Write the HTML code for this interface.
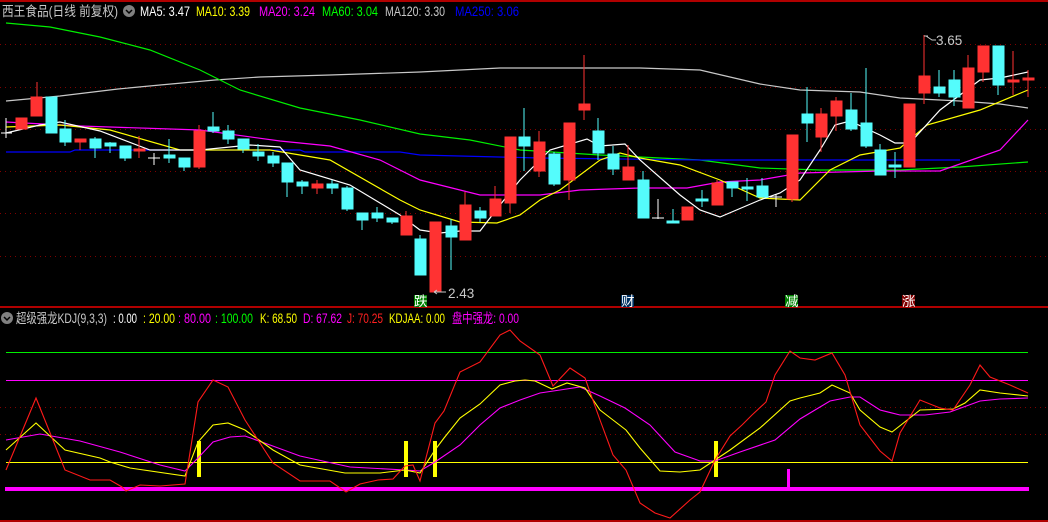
<!DOCTYPE html>
<html><head><meta charset="utf-8"><style>
html,body{margin:0;padding:0;background:#000;width:1048px;height:522px;overflow:hidden}
svg{display:block}
text{font-family:"Liberation Sans","Noto Sans CJK SC",sans-serif;font-size:13.5px}
</style></head><body>
<svg width="1048" height="522" viewBox="0 0 1048 522" xmlns="http://www.w3.org/2000/svg">
<rect width="1048" height="522" fill="#000"/>
<line x1="0" y1="1" x2="1048" y2="1" stroke="#b00000" stroke-width="2"/>
<line x1="0" y1="307" x2="1048" y2="307" stroke="#b00000" stroke-width="2"/>
<line x1="0" y1="521" x2="1048" y2="521" stroke="#b00000" stroke-width="2"/>
<g stroke="#800000" stroke-dasharray="1,4" stroke-width="1">
<line x1="0" y1="44.5" x2="1048" y2="44.5"/><line x1="0" y1="87.5" x2="1048" y2="87.5"/>
<line x1="0" y1="129.5" x2="1048" y2="129.5"/><line x1="0" y1="171.5" x2="1048" y2="171.5"/>
<line x1="0" y1="213.5" x2="1048" y2="213.5"/><line x1="0" y1="256.5" x2="1048" y2="256.5"/>
<line x1="0" y1="407.5" x2="1048" y2="407.5"/><line x1="0" y1="434.5" x2="1048" y2="434.5"/>
</g>
<text x="2" y="16" fill="#c8c8c8" textLength="116" lengthAdjust="spacingAndGlyphs">西王食品(日线 前复权)</text>
<text x="140" y="16" fill="#fff" textLength="50" lengthAdjust="spacingAndGlyphs">MA5: 3.47</text>
<text x="196" y="16" fill="#ffff00" textLength="54" lengthAdjust="spacingAndGlyphs">MA10: 3.39</text>
<text x="259" y="16" fill="#ff00ff" textLength="56" lengthAdjust="spacingAndGlyphs">MA20: 3.24</text>
<text x="322" y="16" fill="#00ff00" textLength="56" lengthAdjust="spacingAndGlyphs">MA60: 3.04</text>
<text x="385" y="16" fill="#c8c8c8" textLength="60" lengthAdjust="spacingAndGlyphs">MA120: 3.30</text>
<text x="455" y="16" fill="#0000ff" textLength="64" lengthAdjust="spacingAndGlyphs">MA250: 3.06</text>
<circle cx="129" cy="11" r="6" fill="#808080"/><path d="M126 10 l3 3 l3 -3" stroke="#000" stroke-width="1.5" fill="none"/>

<g fill="none" stroke-width="1.2">
<polyline stroke="#c8c8c8" points="6,101 60,96 118,89 160,85 215,80 260,77 330,75 420,72 500,68 640,68 700,70 760,84 800,90 860,92 900,98 960,101 1000,104 1028,108"/>
<polyline stroke="#00ee00" points="6,23 50,27 100,37 150,50 200,70 240,90 300,108 360,120 420,134 470,140 520,150 600,155 700,160 760,168 820,170 900,170 960,167 1028,162"/>
<polyline stroke="#0000ff" points="6,152 70,152 75,150 300,150 305,152 400,152 420,155 540,158 700,160 960,160"/>
<polyline stroke="#ff00ff" points="6,122 80,126 200,130 280,141 330,146 380,160 420,180 480,195 540,195 580,190 640,188 687,188 720,182 760,180 800,173 880,171 940,171 1000,150 1028,120"/>
<polyline stroke="#ffff00" points="6,127 60,125 110,130 180,150 270,150 330,160 400,200 420,210 460,222 497,223 520,215 540,200 560,190 600,160 620,153 640,158 680,165 720,180 760,198 800,200 830,170 860,155 900,148 927,125 980,110 1028,90"/>
<polyline stroke="#ffffff" points="6,133 40,125 60,122 100,131 150,150 200,150 250,145 280,147 300,170 350,185 400,215 420,230 440,233 460,231 480,231 500,205 520,180 550,150 587,139 600,146 625,144 640,160 680,195 700,210 720,217 760,200 780,193 800,180 820,150 835,125 850,121 880,135 895,143 910,143 940,110 980,80 1000,78 1028,72"/>
</g>

<g stroke-width="1">
<g stroke="#fff"><line x1="6" y1="118" x2="6" y2="138"/><line x1="1" y1="133" x2="12" y2="133"/>
<line x1="154" y1="153" x2="154" y2="165"/><line x1="148" y1="158" x2="160" y2="158"/>
<line x1="658" y1="199" x2="658" y2="219"/><line x1="652" y1="218" x2="664" y2="218"/>
<line x1="776" y1="194" x2="776" y2="207"/><line x1="770" y1="197" x2="782" y2="197"/></g>
<g stroke="#ff3232" fill="#ff3232">
<rect x="16" y="118" width="11" height="11"/>
<line x1="37" y1="82" x2="37" y2="116"/><rect x="31" y="97" width="11" height="19"/>
<line x1="80" y1="139" x2="80" y2="150"/><rect x="75" y="139" width="11" height="3"/>
<line x1="139" y1="136" x2="139" y2="158"/><rect x="134" y="149" width="11" height="2"/>
<line x1="199" y1="125" x2="199" y2="169"/><rect x="194" y="131" width="11" height="36"/>
<line x1="317" y1="180" x2="317" y2="194"/><rect x="312" y="184" width="11" height="4"/>
<line x1="406" y1="211" x2="406" y2="235"/><rect x="401" y="216" width="11" height="19"/>
<rect x="430" y="222" width="11" height="70"/>
<line x1="465" y1="192" x2="465" y2="240"/><rect x="460" y="205" width="11" height="35"/>
<line x1="495" y1="186" x2="495" y2="216"/><rect x="490" y="199" width="11" height="17"/>
<line x1="510" y1="137" x2="510" y2="213"/><rect x="505" y="137" width="11" height="66"/>
<line x1="539" y1="131" x2="539" y2="177"/><rect x="534" y="142" width="11" height="29"/>
<line x1="569" y1="123" x2="569" y2="200"/><rect x="564" y="123" width="11" height="57"/>
<line x1="584" y1="55" x2="584" y2="120"/><rect x="579" y="104" width="11" height="6"/>
<line x1="628" y1="145" x2="628" y2="180"/><rect x="623" y="167" width="11" height="13"/>
<rect x="682" y="207" width="11" height="13"/>
<line x1="717" y1="180" x2="717" y2="205"/><rect x="712" y="183" width="11" height="22"/>
<line x1="792" y1="135" x2="792" y2="202"/><rect x="787" y="135" width="11" height="64"/>
<line x1="821" y1="108" x2="821" y2="152"/><rect x="816" y="114" width="11" height="23"/>
<line x1="836" y1="97" x2="836" y2="131"/><rect x="831" y="101" width="11" height="15"/>
<rect x="904" y="104" width="11" height="63"/>
<line x1="924" y1="35" x2="924" y2="104"/><rect x="919" y="76" width="11" height="17"/>
<line x1="968" y1="55" x2="968" y2="108"/><rect x="963" y="68" width="11" height="40"/>
<line x1="983" y1="46" x2="983" y2="82"/><rect x="978" y="46" width="11" height="26"/>
<line x1="1013" y1="51" x2="1013" y2="95"/><rect x="1008" y="80" width="11" height="2"/>
<line x1="1028" y1="70" x2="1028" y2="97"/><rect x="1023" y="78" width="11" height="2"/>
</g>
<g stroke="#54fcfc" fill="#54fcfc">
<rect x="46" y="97" width="11" height="36"/>
<line x1="65" y1="120" x2="65" y2="146"/><rect x="60" y="129" width="11" height="13"/>
<line x1="95" y1="137" x2="95" y2="158"/><rect x="90" y="139" width="11" height="9"/>
<line x1="110" y1="142" x2="110" y2="153"/><rect x="105" y="143" width="11" height="3"/>
<line x1="125" y1="146" x2="125" y2="161"/><rect x="120" y="146" width="11" height="12"/>
<line x1="169" y1="139" x2="169" y2="163"/><rect x="164" y="155" width="11" height="3"/>
<line x1="184" y1="158" x2="184" y2="171"/><rect x="179" y="158" width="11" height="9"/>
<line x1="213" y1="112" x2="213" y2="133"/><rect x="208" y="127" width="11" height="4"/>
<line x1="228" y1="125" x2="228" y2="144"/><rect x="223" y="131" width="11" height="8"/>
<line x1="243" y1="139" x2="243" y2="153"/><rect x="238" y="139" width="11" height="10"/>
<line x1="258" y1="144" x2="258" y2="161"/><rect x="253" y="152" width="11" height="4"/>
<line x1="273" y1="152" x2="273" y2="167"/><rect x="268" y="156" width="11" height="7"/>
<line x1="287" y1="163" x2="287" y2="197"/><rect x="282" y="163" width="11" height="19"/>
<line x1="302" y1="180" x2="302" y2="194"/><rect x="297" y="182" width="11" height="4"/>
<line x1="332" y1="180" x2="332" y2="194"/><rect x="327" y="184" width="11" height="4"/>
<line x1="347" y1="186" x2="347" y2="211"/><rect x="342" y="188" width="11" height="21"/>
<line x1="362" y1="213" x2="362" y2="230"/><rect x="357" y="213" width="11" height="7"/>
<line x1="377" y1="207" x2="377" y2="222"/><rect x="372" y="213" width="11" height="5"/>
<line x1="392" y1="218" x2="392" y2="224"/><rect x="387" y="218" width="11" height="4"/>
<line x1="420" y1="235" x2="420" y2="275"/><rect x="415" y="239" width="11" height="36"/>
<line x1="451" y1="219" x2="451" y2="270"/><rect x="446" y="226" width="11" height="11"/>
<line x1="480" y1="207" x2="480" y2="222"/><rect x="475" y="211" width="11" height="7"/>
<line x1="524" y1="108" x2="524" y2="171"/><rect x="519" y="137" width="11" height="9"/>
<line x1="554" y1="152" x2="554" y2="186"/><rect x="549" y="154" width="11" height="30"/>
<line x1="598" y1="118" x2="598" y2="160"/><rect x="593" y="131" width="11" height="22"/>
<line x1="613" y1="146" x2="613" y2="175"/><rect x="608" y="154" width="11" height="15"/>
<line x1="643" y1="171" x2="643" y2="218"/><rect x="638" y="180" width="11" height="38"/>
<line x1="673" y1="209" x2="673" y2="222"/><rect x="667" y="221" width="12" height="2"/>
<line x1="702" y1="190" x2="702" y2="207"/><rect x="696" y="199" width="12" height="2"/>
<line x1="732" y1="182" x2="732" y2="197"/><rect x="727" y="182" width="11" height="6"/>
<line x1="747" y1="178" x2="747" y2="201"/><rect x="742" y="187" width="11" height="2"/>
<line x1="762" y1="178" x2="762" y2="197"/><rect x="757" y="186" width="11" height="11"/>
<line x1="807" y1="87" x2="807" y2="142"/><rect x="802" y="114" width="11" height="9"/>
<line x1="851" y1="93" x2="851" y2="131"/><rect x="846" y="110" width="11" height="19"/>
<line x1="866" y1="68" x2="866" y2="148"/><rect x="861" y="123" width="11" height="23"/>
<line x1="880" y1="144" x2="880" y2="175"/><rect x="875" y="150" width="11" height="25"/>
<line x1="895" y1="152" x2="895" y2="178"/><rect x="889" y="165" width="12" height="2"/>
<line x1="939" y1="70" x2="939" y2="97"/><rect x="934" y="87" width="11" height="6"/>
<line x1="954" y1="70" x2="954" y2="106"/><rect x="949" y="80" width="11" height="17"/>
<line x1="998" y1="46" x2="998" y2="95"/><rect x="993" y="46" width="11" height="39"/>
</g>
</g>
<path d="M924 36 h4 M926 36 l6 4 h4" stroke="#c8c8c8" fill="none"/>
<text x="936" y="45" fill="#c8c8c8" font-size="12">3.65</text>
<path d="M434 292 h12 M434 292 l3 -2 M434 292 l3 2" stroke="#c8c8c8" fill="none"/>
<text x="448" y="298" fill="#c8c8c8" font-size="12">2.43</text>
<rect x="414" y="295" width="13" height="12" fill="#008000"/><text x="414" y="306" fill="#fff" font-size="12">跌</text>
<rect x="621" y="295" width="13" height="12" fill="#003060"/><text x="621" y="306" fill="#fff" font-size="12">财</text>
<rect x="785" y="295" width="13" height="12" fill="#008000"/><text x="785" y="306" fill="#fff" font-size="12">减</text>
<rect x="902" y="295" width="13" height="12" fill="#800000"/><text x="902" y="306" fill="#fff" font-size="12">涨</text>

<circle cx="7" cy="318" r="6" fill="#808080"/><path d="M4 317 l3 3 l3 -3" stroke="#000" stroke-width="1.5" fill="none"/>
<text x="16" y="323" fill="#c8c8c8" textLength="91" lengthAdjust="spacingAndGlyphs">超级强龙KDJ(9,3,3)</text>
<text x="113" y="323" fill="#fff" textLength="24" lengthAdjust="spacingAndGlyphs">: 0.00</text>
<text x="143" y="323" fill="#ffff00" textLength="32" lengthAdjust="spacingAndGlyphs">: 20.00</text>
<text x="178" y="323" fill="#ff00ff" textLength="33" lengthAdjust="spacingAndGlyphs">: 80.00</text>
<text x="215" y="323" fill="#00ff00" textLength="38" lengthAdjust="spacingAndGlyphs">: 100.00</text>
<text x="260" y="323" fill="#ffff00" textLength="37" lengthAdjust="spacingAndGlyphs">K: 68.50</text>
<text x="303" y="323" fill="#ff00ff" textLength="39" lengthAdjust="spacingAndGlyphs">D: 67.62</text>
<text x="347" y="323" fill="#ff2020" textLength="36" lengthAdjust="spacingAndGlyphs">J: 70.25</text>
<text x="389" y="323" fill="#ffff00" textLength="56" lengthAdjust="spacingAndGlyphs">KDJAA: 0.00</text>
<text x="452" y="323" fill="#ff00ff" textLength="67" lengthAdjust="spacingAndGlyphs">盘中强龙: 0.00</text>

<line x1="6" y1="352.5" x2="1028" y2="352.5" stroke="#00ee00"/>
<line x1="6" y1="380.5" x2="1028" y2="380.5" stroke="#ff00ff"/>
<line x1="6" y1="462.5" x2="1028" y2="462.5" stroke="#ffff00"/>
<rect x="5" y="487" width="1024" height="4" fill="#ff00ff"/>
<rect x="787" y="469" width="3" height="19" fill="#ff00ff"/>
<g fill="#ffff00"><rect x="197" y="441" width="4" height="36"/><rect x="404" y="441" width="4" height="36"/><rect x="433" y="441" width="4" height="36"/><rect x="714" y="441" width="4" height="36"/></g>
<g fill="none" stroke-width="1.1">
<polyline stroke="#ff00ff" points="6,440 40,434 80,441 120,452 160,465 185,471 198,458 213,442 230,437 245,436 270,445 300,456 350,467 405,470 420,471 435,462 460,445 480,425 500,408 520,400 540,393 560,390 580,387 600,396 625,408 650,425 675,452 700,461 715,461 740,452 775,440 800,419 830,401 850,397 860,397 880,410 900,415 925,415 950,412 980,401 1000,399 1028,398"/>
<polyline stroke="#ffff00" points="6,450 36,423 65,450 100,458 110,462 130,468 185,476 198,442 213,425 228,423 245,430 273,450 300,465 345,473 380,473 405,470 420,473 435,450 444,438 460,418 480,404 500,385 515,381 525,380 535,381 552,389 567,383 585,388 600,410 613,420 626,430 640,448 660,471 680,472 700,470 715,460 730,450 760,428 790,401 800,398 820,393 832,385 850,393 860,410 880,427 892,432 920,410 953,409 965,403 980,390 1000,393 1028,396"/>
<polyline stroke="#ff1a1a" points="6,470 36,398 65,470 90,480 110,480 122,487 126,491 140,485 160,486 185,484 198,402 213,380 228,387 245,420 273,463 300,481 330,481 346,492 360,484 378,480 393,479 405,466 413,465 420,481 435,423 444,411 460,372 480,362 500,335 510,330 520,341 540,355 553,386 570,368 585,378 600,420 613,455 626,470 640,503 655,513 670,518 690,500 700,492 715,460 730,436 742,425 752,415 766,402 775,375 790,351 800,358 815,360 832,353 845,375 860,425 880,451 892,461 900,433 920,400 940,408 953,410 970,385 980,365 990,377 1010,385 1028,393"/>
</g>
</svg>
</body></html>
